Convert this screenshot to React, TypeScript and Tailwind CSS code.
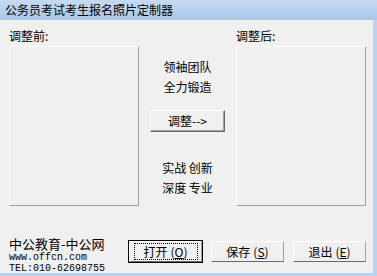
import React from 'react';

const cjk = { fontFamily: '"Noto Sans CJK SC", "SimSun", sans-serif' };
const mono = { fontFamily: '"Liberation Mono", "Courier New", monospace' };

function WinButton({ label, hot, isDefault }: { label: string; hot: string; isDefault?: boolean }) {
  return (
    <button
      className={`w-[75px] h-[23px] flex items-center justify-center bg-[#f0f0f0] text-[12px] text-black border ${
        isDefault ? 'border-black' : 'border-transparent'
      }`}
      style={cjk}
    >
      <span className="w-full h-full flex items-center justify-center border-t border-l border-t-white border-l-white border-r border-b border-r-[#a0a0a0] border-b-[#696969]">
        <span
          className={`flex items-center justify-center px-[4px] leading-[14px] ${
            isDefault ? 'outline outline-1 outline-dotted outline-black w-[62px] h-[15px]' : ''
          }`}
        >
          {label}
          <span className="ml-[3px]">(</span>
          <span className="underline">{hot}</span>
          <span>)</span>
        </span>
      </span>
    </button>
  );
}

function Panel() {
  return (
    <div className="w-[130px] h-[160px] bg-[#f0f0f0] border-t border-l border-white border-r border-b border-r-[#a0a0a0] border-b-[#a0a0a0]" />
  );
}

export default function App() {
  return (
    <div className="w-[377px] h-[276px] bg-[#bcd3ee] flex flex-col overflow-hidden">
      {/* title bar */}
      <div className="h-[20px] shrink-0 bg-gradient-to-b from-[#c6daf1] to-[#a8c6e9] flex items-center pl-[5px]">
        <span className="text-[12px] text-black leading-[14px]" style={cjk}>
          公务员考试考生报名照片定制器
        </span>
      </div>

      <div className="w-[373px] h-[253px] bg-[#f0f0f0] flex flex-col text-black" style={cjk}>
        <div className="flex pl-[9px] pt-[8px]">
          <div className="flex flex-col">
            <div className="h-[16px] text-[12px] leading-[16px]">调整前:</div>
            <div className="mt-[2px]">
              <Panel />
            </div>
          </div>

          <div className="w-[97px] flex flex-col items-center pt-[29px] text-[12px]">
            <div className="leading-[20px]">领袖团队</div>
            <div className="leading-[20px]">全力锻造</div>
            <div className="mt-[13px] w-[75px] h-[22px] flex items-center justify-center bg-[#f0f0f0] border-t border-l border-white border-r border-b border-r-[#696969] border-b-[#696969] shadow-[inset_-1px_-1px_0_#a0a0a0]">
              <span className="leading-[14px]">调整--&gt;</span>
            </div>
            <div className="mt-[26px] leading-[20px]">实战 创新</div>
            <div className="leading-[20px]">深度 专业</div>
          </div>

          <div className="flex flex-col">
            <div className="h-[16px] text-[12px] leading-[16px]">调整后:</div>
            <div className="mt-[2px]">
              <Panel />
            </div>
          </div>
        </div>

        <div className="flex pl-[9px]">
          <div className="flex flex-col mt-[30px] w-[119px]">
            <div className="text-[13px] leading-[15px]">中公教育-中公网</div>
            <div className="text-[10px] leading-[11px] mt-[1px]" style={mono}>
              www.offcn.com
            </div>
            <div className="text-[10px] leading-[11px]" style={mono}>
              TEL:010-62698755
            </div>
          </div>
          <div className="flex gap-[7px] mt-[34px]">
            <WinButton label="打开" hot="O" isDefault />
            <WinButton label="保存" hot="S" />
            <WinButton label="退出" hot="E" />
          </div>
        </div>
      </div>
    </div>
  );
}
